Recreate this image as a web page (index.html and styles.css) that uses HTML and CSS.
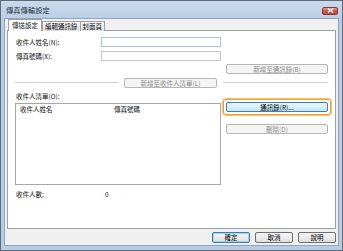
FILE: index.html
```html
<!DOCTYPE html>
<html lang="zh-Hant">
<head>
  <meta charset="UTF-8" />
  <meta name="viewport" content="width=device-width, initial-scale=1.0"/>
  <title>傳真傳輸設定</title>
  <link rel="stylesheet" href="styles.css">
</head>
<body>
  <div class="window">
    <div class="titlebar">
      <span class="title">傳真傳輸設定</span>
      <span class="close">
        <svg width="7" height="5" viewBox="0 0 7 5"><path d="M1 0.5 L6 4.5 M6 0.5 L1 4.5" stroke="#fff" stroke-width="1.3"/></svg>
      </span>
    </div>

    <div class="client">
      <div class="tabs">
        <div class="tab active">傳送設定</div>
        <div class="tab">編輯通訊錄</div>
        <div class="tab">封面頁</div>
      </div>

      <div class="panel">
        <div class="field first">
          <label>收件人姓名(N):</label>
          <input type="text" class="focus-input">
        </div>
        <div class="field">
          <label>傳真號碼(X):</label>
          <input type="text">
        </div>

        <div class="addr-row">
          <button class="btn disabled wide">新增至通訊錄(B)</button>
        </div>

        <div class="sep-row">
          <span class="line"></span>
          <button class="btn disabled add-list">新增至收件人清單(L)</button>
          <span class="line right"></span>
        </div>

        <div class="list-label">收件人清單(O):</div>

        <div class="list-area">
          <div class="list">
            <div class="list-head">
              <span class="col-name">收件人姓名</span>
              <span class="col-fax">傳真號碼</span>
            </div>
          </div>
          <div class="side">
            <div class="focus-ring">
              <button class="btn hot wide">通訊錄(R)...</button>
            </div>
            <button class="btn disabled wide">刪除(D)</button>
          </div>
        </div>

        <div class="count-row">
          <span class="count-label">收件人數:</span>
          <span class="count">0</span>
        </div>
      </div>

      <div class="dialog-buttons">
        <button class="btn default">確定</button>
        <button class="btn">取消</button>
        <button class="btn">說明</button>
      </div>
    </div>
  </div>
</body>
</html>
```

FILE: styles.css
```css
* {
  box-sizing: border-box;
}

body {
  margin: 0;
  padding: 0;
  font-family: "Noto Sans CJK TC", "Liberation Sans", sans-serif;
  font-size: 6.5px;
  color: #111;
  background-color: #fff;
}

.window {
  width: 343px;
  height: 251px;
  border: 1px solid #5f6b78;
  background: linear-gradient(#c9d9eb, #b8cde5 20px, #b8cde5);
  padding: 0 3px 4px 3px;
  display: flex;
  flex-direction: column;
}

.titlebar {
  height: 17px;
  display: flex;
  align-items: center;
  justify-content: space-between;
  padding: 0 1px 0 2px;
}

.title {
  font-size: 7.3px;
  color: #2a3645;
}

.close {
  width: 16px;
  height: 8px;
  margin-top: 2px;
  border: 1px solid #8a3a33;
  border-radius: 2px;
  background: linear-gradient(#e29a90, #c9574b 50%, #c0463a);
  display: flex;
  align-items: center;
  justify-content: center;
}

.client {
  flex: 1;
  background-color: #f0f0f0;
  border: 1px solid #8ea3bd;
  padding: 0 2px;
  display: flex;
  flex-direction: column;
}

.tabs {
  display: flex;
  align-items: flex-end;
  height: 12px;
  padding-left: 1px;
  position: relative;
  z-index: 1;
  margin-bottom: -1px;
}

.tab {
  height: 10px;
  line-height: 9px;
  padding: 0 2px;
  border: 1px solid #a0a0a0;
  border-bottom: none;
  background: linear-gradient(#f6f6f6, #e3e3e3);
  margin-right: -1px;
}

.tab.active {
  height: 12px;
  line-height: 11px;
  background-color: #fff;
  background-image: none;
  padding: 0 3px;
  margin-right: 0;
}

.panel {
  height: 199px;
  background-color: #fff;
  border: 1px solid #a0a0a0;
  padding: 0 7px;
}

.field {
  display: flex;
  align-items: center;
  height: 10px;
  margin-top: 4px;
}

.field.first {
  margin-top: 6px;
}

.field label {
  width: 86px;
  padding-left: 1px;
}

.field input {
  width: 120px;
  height: 10px;
  border: 1px solid #c6c6c6;
  padding: 0;
  margin: 0;
  outline: none;
}

.field input.focus-input {
  border-color: #a9c6e2;
}

.btn {
  font-family: inherit;
  font-size: 6.5px;
  color: #111;
  height: 10px;
  line-height: 8px;
  padding: 0;
  margin: 0;
  border: 1px solid #8f8f8f;
  border-radius: 2px;
  background: linear-gradient(#f4f4f4, #ebebeb 50%, #dddddd);
}

.btn.disabled {
  color: #8d8d8d;
  border-color: #b5b5b5;
  background: #f4f4f4;
}

.btn.wide {
  width: 102px;
}

.addr-row {
  display: flex;
  justify-content: flex-end;
  margin-top: 3px;
}

.sep-row {
  display: flex;
  align-items: center;
  gap: 6px;
  margin-top: 4px;
}

.sep-row .line {
  flex: 1;
  height: 2px;
  border-top: 1px solid #cfcfcf;
  border-bottom: 1px solid #fff;
}

.sep-row .line.right {
  flex: none;
  width: 105px;
}

.btn.add-list {
  width: 93px;
}

.list-label {
  margin-top: 3px;
  height: 10px;
  line-height: 10px;
  padding-left: 1px;
}

.list-area {
  display: grid;
  grid-template-columns: 206px 102px;
  column-gap: 5px;
  margin-top: 2px;
}

.list {
  height: 82px;
  border: 1px solid #a8a8a8;
}

.list-head {
  display: flex;
  height: 11px;
  line-height: 11px;
}

.col-name {
  width: 98px;
  padding-left: 4px;
}

.side {
  display: flex;
  flex-direction: column;
  align-items: center;
}

.focus-ring {
  margin-top: -4px;
  padding: 2px;
  border: 1px solid #f0a030;
  border-radius: 3px;
  box-shadow: 0 0 0 1px #f7c070;
}

.btn.hot {
  border-color: #3c7fb1;
  background: linear-gradient(#eaf6fd, #d9f0fc 50%, #bee6fd);
  color: #000;
}

.side .btn.disabled {
  margin-top: 9px;
}

.count-row {
  display: flex;
  margin-top: 4px;
  height: 10px;
  line-height: 10px;
}

.count-label {
  width: 90px;
  padding-left: 1px;
}

.dialog-buttons {
  display: flex;
  justify-content: flex-end;
  gap: 5px;
  margin-top: 3px;
}

.dialog-buttons .btn {
  width: 38px;
  height: 11px;
  line-height: 9px;
  border-color: #707070;
  color: #000;
}

.dialog-buttons .btn.default {
  border-color: #3c7fb1;
  box-shadow: inset 0 0 0 1px #a0d4f0;
}
```
